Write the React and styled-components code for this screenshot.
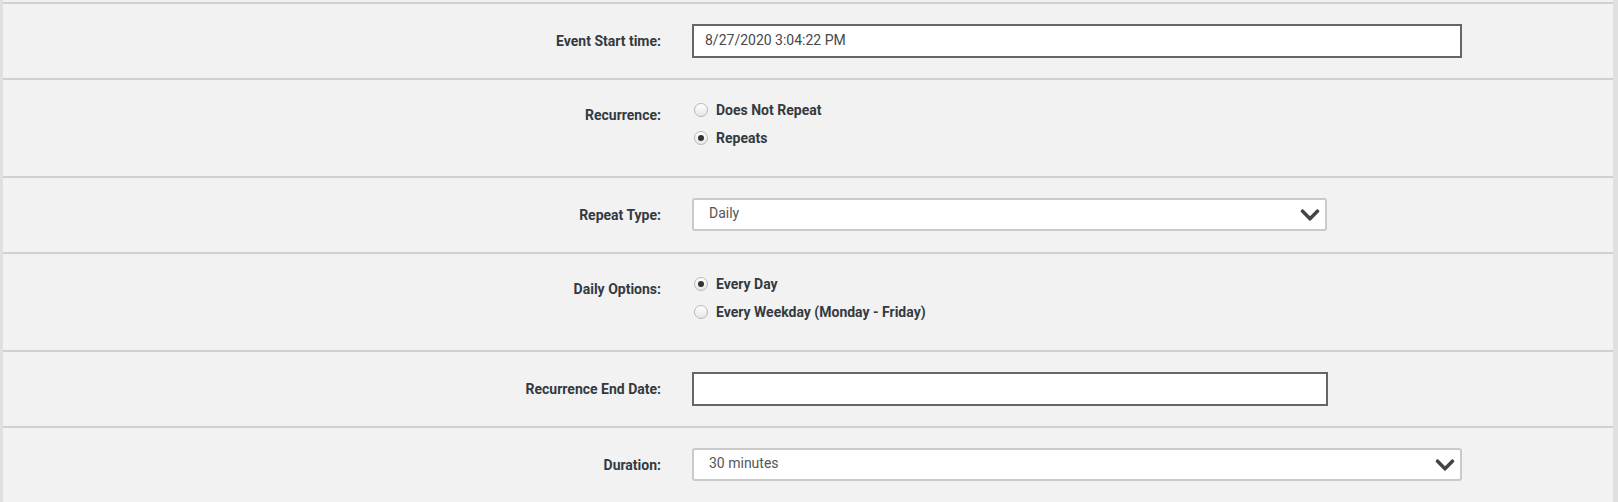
import { FaChevronDown } from 'react-icons/fa'
import styled, { createGlobalStyle } from 'styled-components'

const GlobalStyle = createGlobalStyle`
    html, body {
        margin: 0;
        padding: 0;
        background: #f2f2f2;
    }

    * {
        box-sizing: border-box;
    }
`

const Radio = ({ checked, label }) => (
    <RadioItem>
        <RadioCircle checked={checked} />
        <RadioText>{label}</RadioText>
    </RadioItem>
)

const Select = ({ value, width }) => (
    <SelectBox width={width}>
        <SelectValue>{value}</SelectValue>
        <FaChevronDown size={22} color="#444" />
    </SelectBox>
)

const App = () => {
    return (
        <>
            <GlobalStyle />
            <Wrapper>
                <Row>
                    <Label>Event Start time:</Label>
                    <TextInput width="770px">8/27/2020 3:04:22 PM</TextInput>
                </Row>

                <Row multi>
                    <Label multi>Recurrence:</Label>
                    <RadioList>
                        <Radio label="Does Not Repeat" />
                        <Radio label="Repeats" checked />
                    </RadioList>
                </Row>

                <Row>
                    <Label>Repeat Type:</Label>
                    <Select value="Daily" width="635px" />
                </Row>

                <Row multi>
                    <Label multi>Daily Options:</Label>
                    <RadioList>
                        <Radio label="Every Day" checked />
                        <Radio label="Every Weekday (Monday - Friday)" />
                    </RadioList>
                </Row>

                <Row>
                    <Label>Recurrence End Date:</Label>
                    <TextInput width="636px" />
                </Row>

                <Row>
                    <Label>Duration:</Label>
                    <Select value="30 minutes" width="770px" />
                </Row>
            </Wrapper>
        </>
    )
}

export default App

const Wrapper = styled.div`
    min-height: 502px;
    padding-top: 2px;
    border-left: 3px solid #e0e0e0;
    border-right: 5px solid #e0e0e0;
    background: #f2f2f2;
    font-family: Roboto, "Liberation Sans", sans-serif;
`

const Row = styled.div`
    display: grid;
    grid-template-columns: 658px 1fr;
    column-gap: 31px;
    align-items: start;
    padding: ${props => props.multi ? '20px 0 24px' : '20px 0'};
    border-top: 2px solid #d0d0d0;
`

const Label = styled.label`
    margin-top: ${props => props.multi ? '-2px' : '0'};
    color: #343a40;
    font-size: 14px;
    font-weight: 700;
    line-height: 34px;
    text-align: right;
`

const TextInput = styled.div`
    width: ${props => props.width};
    height: 34px;
    padding: 0 11px 2px;
    display: flex;
    align-items: center;
    background: #fff;
    border: 2px solid #666;
    color: #484848;
    font-size: 14px;
`

const SelectBox = styled.div`
    width: ${props => props.width};
    height: 33px;
    padding: 0 4px 0 15px;
    display: flex;
    justify-content: space-between;
    align-items: center;
    background: #fff;
    border: 2px solid #cacaca;
    border-radius: 3px;
`

const SelectValue = styled.span`
    margin-bottom: 3px;
    color: #555;
    font-size: 14px;
`

const RadioList = styled.div`
    display: flex;
    flex-direction: column;
    margin-top: -4px;
`

const RadioItem = styled.div`
    height: 28px;
    display: flex;
    align-items: center;
    gap: 8px;
    padding-left: 2px;
`

const RadioCircle = styled.span`
    position: relative;
    width: 14px;
    height: 14px;
    border-radius: 50%;
    border: 1px solid #b8b8b8;
    background: linear-gradient(#ffffff, #e6e6e6);

    &::after {
        content: '';
        display: ${props => props.checked ? 'block' : 'none'};
        position: absolute;
        top: 3px;
        left: 3px;
        width: 6px;
        height: 6px;
        border-radius: 50%;
        background: #333;
    }
`

const RadioText = styled.span`
    color: #343a40;
    font-size: 14px;
    font-weight: 700;
`
